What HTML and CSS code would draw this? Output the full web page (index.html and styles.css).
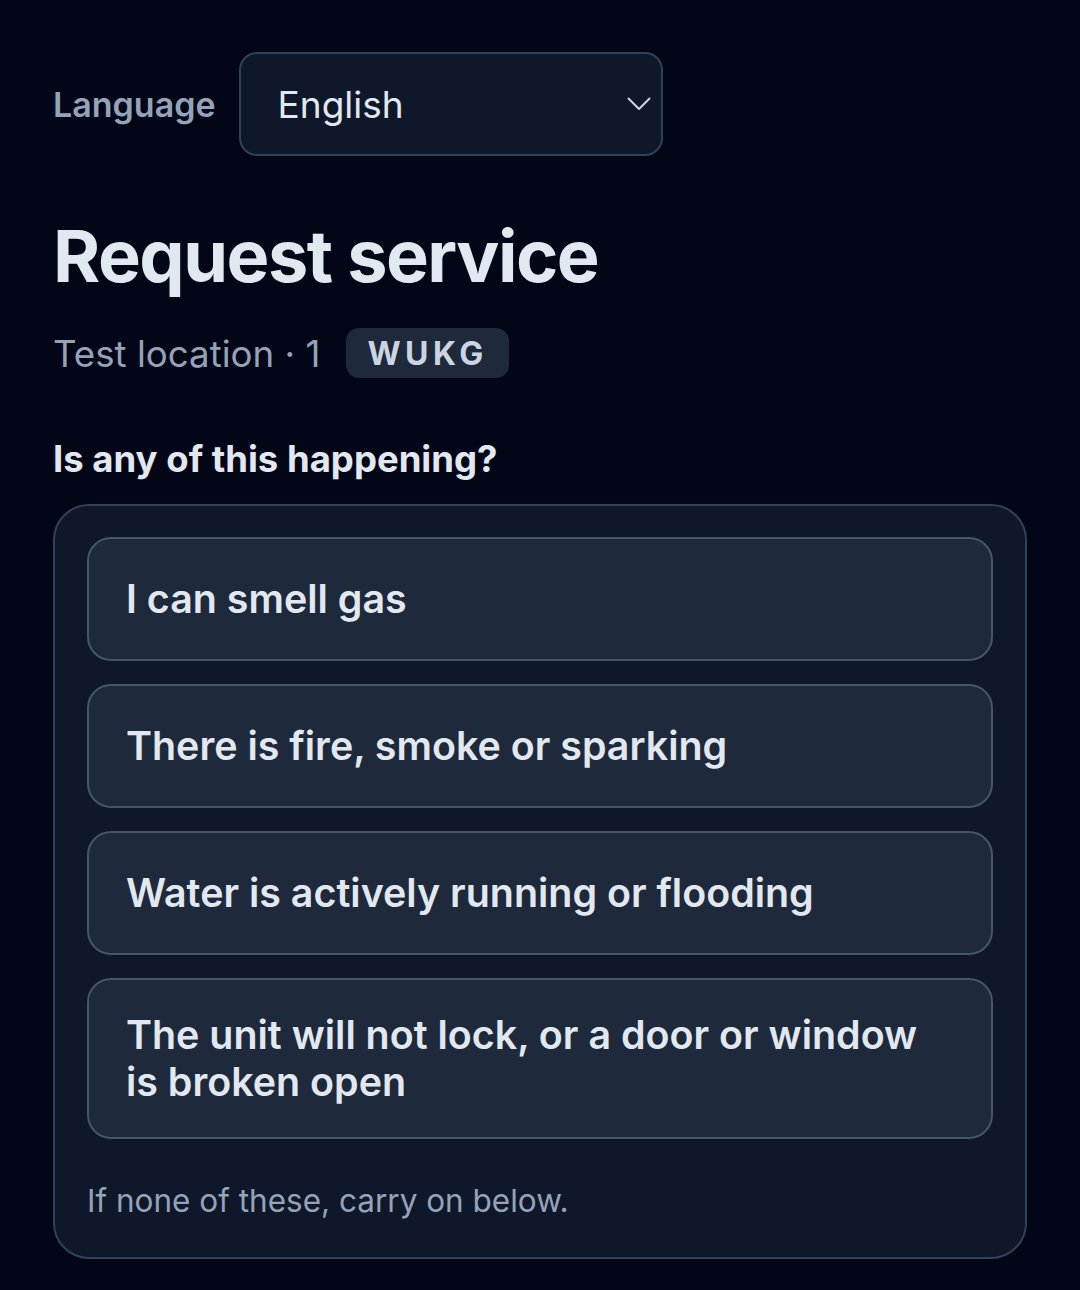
FILE: index.html
```html
<!DOCTYPE html>
<html lang="en">
<head>
<meta charset="utf-8">
<title>Request service</title>
<link rel="stylesheet" href="styles.css">
</head>
<body>
<main class="page">
  <div class="lang-row">
    <label class="lang-label" for="lang">Language</label>
    <div class="select">
      <span class="select-value">English</span>
      <svg class="chevron" width="24" height="14" viewBox="0 0 24 14" aria-hidden="true">
        <path d="M1.5 1.5 L12 12 L22.5 1.5" fill="none" stroke="#cbd5e1" stroke-width="2" stroke-linecap="round" stroke-linejoin="round"/>
      </svg>
    </div>
  </div>

  <h1 class="title">Request service</h1>
  <div class="subtitle">
    <span class="location">Test location · 1</span>
    <span class="badge">WUKG</span>
  </div>

  <h2 class="question">Is any of this happening?</h2>
  <section class="card">
    <div class="options">
      <button class="option">I can smell gas</button>
      <button class="option">There is fire, smoke or sparking</button>
      <button class="option">Water is actively running or flooding</button>
      <button class="option">The unit will not lock, or a door or window is broken open</button>
    </div>
    <p class="note">If none of these, carry on below.</p>
  </section>
</main>
</body>
</html>
```

FILE: styles.css
```css
* { box-sizing: border-box; }
html, body {
  margin: 0;
  background: #020617;
}
body {
  font-family: "Inter", "Noto Sans", sans-serif;
  color: #e2e8f0;
}
.page {
  padding: 52px 53px 30px 53px;
  display: flex;
  flex-direction: column;
}
.lang-row {
  display: flex;
  align-items: center;
  gap: 23px;
}
.lang-label {
  font-size: 34px;
  font-weight: 600;
  color: #94a3b8;
}
.select {
  width: 424px;
  height: 104px;
  background: #0f172a;
  border: 2px solid #334155;
  border-radius: 18px;
  display: flex;
  align-items: center;
  justify-content: space-between;
  padding: 0 10px 0 37px;
}
.select-value {
  font-size: 37px;
  font-weight: 400;
  color: #e2e8f0;
}
.chevron { display: block; }
.title {
  margin: 60px 0 0 0;
  font-size: 72px;
  line-height: 79px;
  font-weight: 700;
  letter-spacing: -1.5px;
  color: #e2e8f0;
}
.subtitle {
  margin-top: 33px;
  display: flex;
  align-items: center;
  gap: 26px;
}
.location {
  font-size: 36.7px;
  color: #94a3b8;
}
.badge {
  height: 50px;
  padding: 0 21px;
  display: flex;
  align-items: center;
  background: #1e293b;
  border-radius: 13px;
  font-size: 32px;
  font-weight: 700;
  letter-spacing: 4.5px;
  color: #cbd5e1;
}
.question {
  margin: 59px 0 0 0;
  font-size: 36.5px;
  line-height: 44px;
  font-weight: 700;
  color: #e2e8f0;
}
.card {
  margin-top: 23px;
  background: #0f172a;
  border: 2px solid #334155;
  border-radius: 36px;
  padding: 31px 32px 34px 32px;
}
.options {
  display: flex;
  flex-direction: column;
  gap: 23px;
}
.option {
  display: flex;
  align-items: center;
  min-height: 124px;
  width: 100%;
  text-align: left;
  background: #1e293b;
  border: 2px solid #475569;
  border-radius: 24px;
  padding: 31.5px 60px 31.5px 37px;
  font-family: inherit;
  font-size: 39.4px;
  line-height: 47px;
  font-weight: 600;
  color: #e2e8f0;
}
.note {
  margin: 40px 0 0 0;
  font-size: 31.5px;
  line-height: 44px;
  color: #94a3b8;
}
```
